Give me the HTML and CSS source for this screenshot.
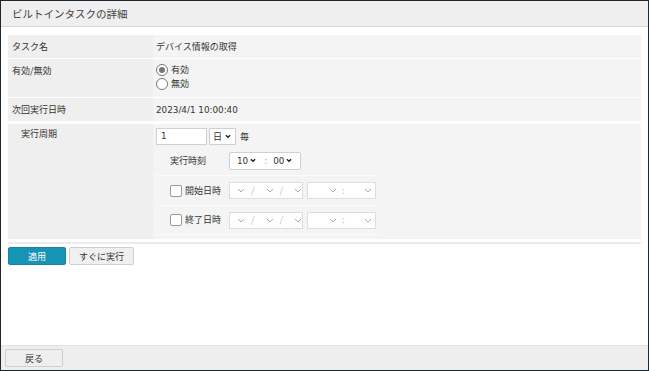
FILE: index.html
```html
<!DOCTYPE html>
<html lang="ja">
<head>
  <meta charset="UTF-8">
  <title>ビルトインタスクの詳細</title>
  <link rel="stylesheet" href="styles.css">
</head>
<body>
  <div class="window">
      <div class="titlebar">ビルトインタスクの詳細</div>
      <div class="content">
          <div class="detail">
              <div class="row">
                  <div class="label">タスク名</div>
                  <div class="value">デバイス情報の取得</div>
              </div>
              <div class="row row-enable">
                  <div class="label">有効/無効</div>
                  <div class="value">
                      <label class="radio-line"><span class="radio checked"></span>有効</label>
                      <label class="radio-line"><span class="radio"></span>無効</label>
                  </div>
              </div>
              <div class="row">
                  <div class="label">次回実行日時</div>
                  <div class="value latin">2023/4/1 10:00:40</div>
              </div>
              <div class="row row-cycle">
                  <div class="label">実行周期</div>
                  <div class="value">
                      <div class="cycle-line">
                          <span class="text-input latin">1</span>
                          <span class="select sel-unit">日<svg class="chev" viewBox="0 0 7 5"><path d="M1 1l2.5 2.5L6 1"/></svg></span>
                          <span class="every">毎</span>
                      </div>
                      <div class="sub">
                          <div class="sub-row">
                              <div class="sub-label">実行時刻</div>
                              <span class="select sel-time latin">10<svg class="chev" viewBox="0 0 7 5"><path d="M1 1l2.5 2.5L6 1"/></svg><span class="colon">:</span>00<svg class="chev" viewBox="0 0 7 5"><path d="M1 1l2.5 2.5L6 1"/></svg></span>
                          </div>
                          <div class="sub-row">
                              <label class="sub-label"><span class="check"></span>開始日時</label>
                              <span class="dbox date-box">
                                  <span class="dsel"><svg class="lchev" viewBox="0 0 8 5"><path d="M1 1l3 3 3-3"/></svg></span><span class="sep">/</span>
                                  <span class="dsel"><svg class="lchev" viewBox="0 0 8 5"><path d="M1 1l3 3 3-3"/></svg></span><span class="sep">/</span>
                                  <span class="dsel"><svg class="lchev" viewBox="0 0 8 5"><path d="M1 1l3 3 3-3"/></svg></span>
                              </span>
                              <span class="dbox time-box">
                                  <span class="dsel hh"><svg class="lchev" viewBox="0 0 8 5"><path d="M1 1l3 3 3-3"/></svg></span><span class="sep">:</span>
                                  <span class="dsel mm"><svg class="lchev" viewBox="0 0 8 5"><path d="M1 1l3 3 3-3"/></svg></span>
                              </span>
                          </div>
                          <div class="sub-row last">
                              <label class="sub-label"><span class="check"></span>終了日時</label>
                              <span class="dbox date-box">
                                  <span class="dsel"><svg class="lchev" viewBox="0 0 8 5"><path d="M1 1l3 3 3-3"/></svg></span><span class="sep">/</span>
                                  <span class="dsel"><svg class="lchev" viewBox="0 0 8 5"><path d="M1 1l3 3 3-3"/></svg></span><span class="sep">/</span>
                                  <span class="dsel"><svg class="lchev" viewBox="0 0 8 5"><path d="M1 1l3 3 3-3"/></svg></span>
                              </span>
                              <span class="dbox time-box">
                                  <span class="dsel hh"><svg class="lchev" viewBox="0 0 8 5"><path d="M1 1l3 3 3-3"/></svg></span><span class="sep">:</span>
                                  <span class="dsel mm"><svg class="lchev" viewBox="0 0 8 5"><path d="M1 1l3 3 3-3"/></svg></span>
                              </span>
                          </div>
                      </div>
                  </div>
              </div>
          </div>
          <div class="actions">
              <button class="btn btn-primary">適用</button>
              <button class="btn btn-run">すぐに実行</button>
          </div>
      </div>
      <div class="footer">
          <button class="btn btn-back">戻る</button>
      </div>
  </div>
</body>
</html>
```

FILE: styles.css
```css
body {
    margin: 0;
    padding: 0;
    font-family: "Noto Sans CJK JP", "Noto Sans", sans-serif;
    font-size: 9px;
    color: #333;
    background: #fff;
}
.latin {
    font-family: "DejaVu Sans", "Noto Sans CJK JP", sans-serif;
    font-size: 8.8px;
}
.window {
    width: 649px;
    height: 371px;
    box-sizing: border-box;
    border: 1px solid #1d2731;
    display: flex;
    flex-direction: column;
    background: #fff;
}
.titlebar {
    height: 25px;
    line-height: 25px;
    padding-left: 11px;
    font-size: 10.5px;
    color: #444;
    background: #efefef;
    border-bottom: 1px solid #d6d6d6;
}
.content {
    flex: 1;
    padding: 8px 7px 0 7px;
}
.row {
    display: flex;
    margin-bottom: 1px;
    background: #f4f4f4;
}
.row + .row {
    margin-top: 1px;
}
.label {
    width: 141px;
    flex-shrink: 0;
    padding: 6px 0 5px 4px;
    line-height: 12px;
    background: #efefef;
}
.value {
    flex: 1;
    padding: 6px 3px 5px 3px;
    line-height: 12px;
}
.row-enable .value {
    padding-top: 4px;
    padding-bottom: 6px;
}
.radio-line {
    display: flex;
    align-items: center;
    height: 14px;
}
.radio {
    width: 10px;
    height: 10px;
    border: 1px solid #777;
    border-radius: 50%;
    background: #fff;
    margin-right: 3px;
    position: relative;
}
.radio.checked::after {
    content: "";
    position: absolute;
    left: 2px;
    top: 2px;
    width: 6px;
    height: 6px;
    border-radius: 50%;
    background: #777;
}
.row-cycle {
    margin-top: 3px !important;
}
.row-cycle .label {
    padding: 4px 0 4px 13px;
    width: 132px;
}
.row-cycle .value {
    padding: 4px 3px 4px 3px;
}
.cycle-line {
    display: flex;
    align-items: center;
    height: 17px;
}
.text-input {
    width: 45px;
    height: 15px;
    line-height: 15px;
    padding-left: 4px;
    background: #fff;
    border: 1px solid #d0d0d0;
}
.select {
    display: inline-flex;
    align-items: center;
    height: 15px;
    background: #fff;
    border: 1px solid #d0d0d0;
    color: #333;
}
.sel-unit {
    width: 22px;
    padding-left: 3px;
    margin-left: 2px;
}
.chev {
    width: 6px;
    height: 5px;
    margin-left: 3px;
    fill: none;
    stroke: #222;
    stroke-width: 1.6;
}
.every {
    margin-left: 4px;
}
.sub {
    margin-top: 1px;
    width: 223px;
}
.sub-row {
    display: flex;
    align-items: center;
    height: 29px;
    border-bottom: 1px solid #fbfbfb;
}
.sub-row.last {
    height: 28px;
}
.sub-label {
    width: 59px;
    padding-left: 14px;
    display: flex;
    align-items: center;
    flex-shrink: 0;
}
.check {
    width: 10px;
    height: 10px;
    border: 1px solid #999;
    border-radius: 2px;
    background: #fff;
    margin-right: 3px;
}
.sel-time {
    width: 63px;
    height: 16px;
    padding-left: 7px;
    border-radius: 2px;
}
.sel-time .chev {
    margin-left: 2px;
}
.colon {
    margin: 0 6px 0 8px;
    color: #999;
}
.dbox {
    display: inline-flex;
    align-items: center;
    height: 15px;
    background: #fff;
    border: 1px solid #ddd;
    color: #bbb;
}
.date-box {
    width: 72px;
}
.time-box {
    width: 67px;
    margin-left: 4px;
}
.dsel {
    display: inline-flex;
    justify-content: flex-end;
    width: 15px;
}
.date-box .sep {
    margin: 0 4px 0 6px;
}
.time-box .hh {
    width: 29px;
}
.time-box .sep {
    margin-left: 5px;
}
.time-box .mm {
    flex: 1;
    margin-right: 3px;
}
.lchev {
    width: 8px;
    height: 5px;
    fill: none;
    stroke: #aaa;
    stroke-width: 1;
}
.actions {
    margin-top: 3px;
    padding-top: 3px;
    border-top: 2px solid #ececec;
    display: flex;
    gap: 3px;
}
.btn {
    font-family: inherit;
    font-size: 9px;
    height: 18px;
    padding: 0;
    border-radius: 2px;
    cursor: pointer;
}
.btn-primary {
    width: 58px;
    background: #1793b6;
    border: 1px solid #1585a5;
    color: #fff;
}
.btn-run {
    width: 65px;
    background: #f0f0f0;
    border: 1px solid #cfcfcf;
    color: #333;
}
.footer {
    height: 25px;
    border-top: 1px solid #e2e2e2;
    background: #eeeeee;
    padding: 3px 0 0 4px;
    box-sizing: border-box;
}
.btn-back {
    width: 58px;
    background: #efefef;
    border: 1px solid #cfcfcf;
    color: #333;
}
```
